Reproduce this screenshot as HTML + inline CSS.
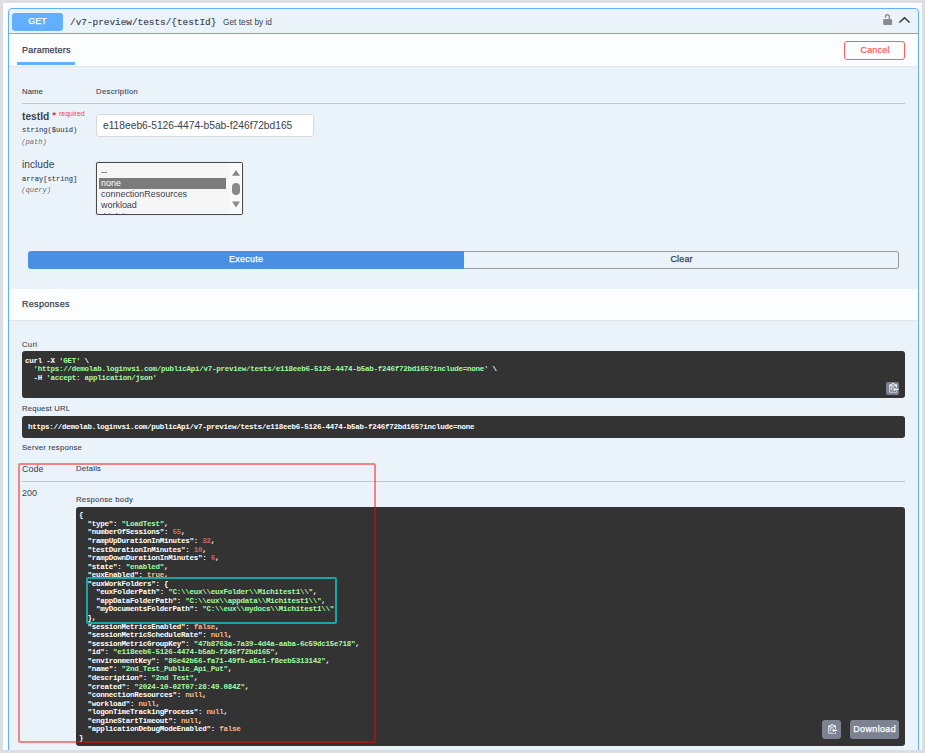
<!DOCTYPE html>
<html><head><meta charset="utf-8">
<style>
*{margin:0;padding:0;box-sizing:border-box}
html,body{width:925px;height:753px;overflow:hidden;background:#dddee1}
body{position:relative;font-family:"Liberation Sans",sans-serif;color:#3b4151}
.a{position:absolute}
.t{position:absolute;white-space:pre;line-height:1;font-family:"Liberation Sans",sans-serif}
.m{position:absolute;white-space:pre;line-height:1;font-family:"Liberation Mono",monospace}
#frame{position:absolute;left:3px;top:3px;width:919px;height:747px;background:#fff;overflow:hidden}
#op{position:absolute;left:5px;top:5px;width:911px;height:760px;border:1px solid #61affe;border-radius:4px;background:#ebf3fa}
.code{position:absolute;white-space:pre;font-family:"Liberation Mono",monospace;font-weight:bold;font-size:7.5px;letter-spacing:-0.25px;line-height:8.56px;color:#fff}
.code .s{color:#a2fca2}.code .n{color:#d36363}.code .l{color:#f8b986}
</style></head><body>
<div id="frame"><div style="position:absolute;left:4px;top:1px;right:0;bottom:0;background:#fafafa"></div><div id="op"></div></div>
<div class="a" style="left:9px;top:9px;width:909px;height:25px;border-bottom:1px solid #61affe"></div>
<div class="a" style="left:12px;top:12.5px;width:51px;height:18px;background:#61affe;border-radius:3px"></div>
<div class="t" style="left:12px;top:17.25px;font-size:8.96px;letter-spacing:0.000px;-webkit-text-stroke:0.25px #fff;text-indent:0.000px;color:#fff;width:51px;text-align:center">GET</div>
<div class="m" style="left:70px;top:17.65px;font-size:9.39px;color:#3b4151;-webkit-text-stroke:0.15px #3b4151">/v7-preview/tests/{testId}</div>
<div class="t" style="left:223px;top:17.5px;font-size:8.32px;color:#3b4151;">Get test by id</div>
<svg class="a" style="left:881px;top:12px" width="14" height="16" viewBox="0 0 14 16">
<path d="M4.5 5.8 V4.7 A1.9 1.9 0 0 1 8.3 4.7 V7.2" fill="none" stroke="#8b8b8b" stroke-width="1.4"/>
<rect x="2.2" y="7" width="8.9" height="6" rx="1.1" fill="#8b8b8b"/></svg>
<svg class="a" style="left:897px;top:13px" width="16" height="12" viewBox="0 0 16 12">
<path d="M2.4 9.5 L7.5 4.7 L12.6 9.5" fill="none" stroke="#303030" stroke-width="1.35"/></svg>
<div class="a" style="left:9px;top:34px;width:909px;height:32px;background:#fbfdff;box-shadow:0 1px 1px rgba(0,0,0,.05)"></div>
<div class="t" style="left:22px;top:46.3px;font-size:8.96px;letter-spacing:0.251px;-webkit-text-stroke:0.25px #3b4151;color:#3b4151;">Parameters</div>
<div class="a" style="left:17px;top:62px;width:58px;height:2.6px;background:#61affe"></div>
<div class="a" style="left:844px;top:41px;width:61px;height:18.6px;border:1.3px solid #ff6060;border-radius:3px"></div>
<div class="t" style="left:845px;top:46.1px;font-size:8.96px;letter-spacing:0.249px;-webkit-text-stroke:0.25px #ff6060;text-indent:0.249px;color:#ff6060;width:60px;text-align:center">Cancel</div>
<div class="t" style="left:22px;top:87.7px;font-size:7.68px;letter-spacing:0.108px;-webkit-text-stroke:0.1px #3b4151;color:#3b4151;">Name</div>
<div class="t" style="left:96px;top:87.7px;font-size:7.68px;letter-spacing:0.348px;-webkit-text-stroke:0.1px #3b4151;color:#3b4151;">Description</div>
<div class="a" style="left:22px;top:103px;width:883px;height:1px;background:rgba(59,65,81,.25)"></div>
<div class="t" style="left:22px;top:111.7px;font-size:10.24px;letter-spacing:0.378px;-webkit-text-stroke:0.25px #3b4151;color:#3b4151;font-weight:bold;letter-spacing:0;-webkit-text-stroke:0">testId</div>
<svg class="a" style="left:51.6px;top:112.4px" width="4.2" height="4.4" viewBox="0 0 4.2 4.4"><path d="M2.05 2.0 L2.05 0.45 M2.05 2.0 L3.52 1.52 M2.05 2.0 L0.58 1.52 M2.05 2.0 L2.96 3.25 M2.05 2.0 L1.14 3.25" stroke="#f00" stroke-width="0.75" stroke-linecap="round" fill="none"/></svg>
<div class="t" style="left:59px;top:110.3px;font-size:7px;color:#ff3b3b;">required</div>
<div class="m" style="left:22px;top:126.5px;font-size:7.08px;color:#3b4151;-webkit-text-stroke:0.1px #3b4151">string($uuid)</div>
<div class="m" style="left:21.3px;top:138.5px;font-size:7.08px;color:#6e6e6e;font-style:italic">(path)</div>
<div class="a" style="left:96px;top:114px;width:218px;height:23px;background:#fff;border:1px solid #d9d9d9;border-radius:3px"></div>
<div class="t" style="left:103px;top:120.95px;font-size:10.24px;color:#3b4151;">e118eeb6-5126-4474-b5ab-f246f72bd165</div>
<div class="t" style="left:22px;top:160px;font-size:10.24px;color:#3b4151;">include</div>
<div class="m" style="left:22px;top:175.5px;font-size:7.08px;color:#3b4151;-webkit-text-stroke:0.1px #3b4151">array[string]</div>
<div class="m" style="left:21.3px;top:186.5px;font-size:7.08px;color:#6e6e6e;font-style:italic">(query)</div>
<div class="a" style="left:96px;top:162px;width:147px;height:53px;background:#f6f6f6;border:1px solid #4a4a4a;border-radius:2px;box-shadow:0 0 1px rgba(0,0,0,.3)"></div>
<div class="a" style="left:99px;top:177.5px;width:127px;height:11px;background:#7b7b7b"></div>
<div class="t" style="left:101px;top:168px;font-size:8.96px;color:#3b4151;">--</div>
<div class="t" style="left:101px;top:178.5px;font-size:8.96px;color:#fff;">none</div>
<div class="t" style="left:101px;top:189.5px;font-size:8.96px;color:#3b4151;">connectionResources</div>
<div class="t" style="left:101px;top:200.5px;font-size:8.96px;color:#3b4151;">workload</div>
<div class="a" style="left:97px;top:163px;width:145px;height:51px;overflow:hidden"><div class="t" style="left:4px;top:49.5px;font-size:8.96px;color:#3b4151">thinktime</div></div>
<div class="a" style="left:229px;top:163px;width:13px;height:51px;background:#fafafa"></div>
<svg class="a" style="left:229px;top:163px" width="13" height="51" viewBox="0 0 13 51">
<path d="M3 12.7 L7 7 L11 12.7 Z" fill="#8a8a8a"/>
<rect x="3" y="20" width="8" height="12" rx="4" fill="#8a8a8a"/>
<path d="M3 38.5 L7 44.4 L11 38.5 Z" fill="#8a8a8a"/></svg>
<div class="a" style="left:28px;top:251px;width:436px;height:18px;background:#4990e2;border-radius:3px 0 0 3px"></div>
<div class="t" style="left:28px;top:255.1px;font-size:8.96px;letter-spacing:0.284px;-webkit-text-stroke:0.25px #fff;text-indent:0.284px;color:#fff;width:436px;text-align:center">Execute</div>
<div class="a" style="left:464px;top:251px;width:435px;height:17.8px;border:1.3px solid #9c9c9c;border-left:none;border-radius:0 3px 3px 0"></div>
<div class="t" style="left:464px;top:255.1px;font-size:8.96px;letter-spacing:0.200px;-webkit-text-stroke:0.25px #3b4151;text-indent:0.200px;color:#3b4151;width:435px;text-align:center">Clear</div>
<div class="a" style="left:9px;top:289px;width:909px;height:31px;background:#fbfdff;box-shadow:0 1px 1px rgba(0,0,0,.05)"></div>
<div class="t" style="left:22px;top:300.4px;font-size:8.96px;letter-spacing:0.331px;-webkit-text-stroke:0.25px #3b4151;color:#3b4151;">Responses</div>
<div class="t" style="left:22px;top:340.65px;font-size:7.68px;letter-spacing:0.320px;-webkit-text-stroke:0.1px #3b4151;color:#3b4151;">Curl</div>
<div class="a" style="left:22px;top:351px;width:883px;height:46.5px;background:#333;border-radius:3px"></div>
<div class="code" style="left:25px;top:356.5px">curl -X <span class="s">'GET'</span> \
  <span class="s">'https://demolab.loginvsi.com/publicApi/v7-preview/tests/e118eeb6-5126-4474-b5ab-f246f72bd165?include=none'</span> \
  -H <span class="s">'accept: application/json'</span></div>
<div class="a" style="left:886px;top:382px;width:13px;height:13px;background:#7d8293;border-radius:2px"></div>
<div class="t" style="left:22px;top:404.85px;font-size:7.68px;letter-spacing:0.192px;-webkit-text-stroke:0.1px #3b4151;color:#3b4151;">Request URL</div>
<div class="a" style="left:22px;top:416.3px;width:883px;height:21.4px;background:#333;border-radius:3px"></div>
<div class="code" style="left:28px;top:423px">https://demolab.loginvsi.com/publicApi/v7-preview/tests/e118eeb6-5126-4474-b5ab-f246f72bd165?include=none</div>
<div class="t" style="left:22px;top:444.3px;font-size:7.68px;letter-spacing:0.256px;-webkit-text-stroke:0.1px #3b4151;color:#3b4151;">Server response</div>
<div class="t" style="left:22px;top:464.55px;font-size:8.96px;color:#3b4151;">Code</div>
<div class="t" style="left:76px;top:464.6px;font-size:7.68px;letter-spacing:0.244px;-webkit-text-stroke:0.1px #3b4151;color:#3b4151;">Details</div>
<div class="a" style="left:22px;top:481px;width:883px;height:1px;background:rgba(59,65,81,.25)"></div>
<div class="t" style="left:22px;top:489.4px;font-size:8.96px;color:#3b4151;">200</div>
<div class="t" style="left:76px;top:495.9px;font-size:7.68px;letter-spacing:0.293px;-webkit-text-stroke:0.1px #3b4151;color:#3b4151;">Response body</div>
<div class="a" style="left:75.7px;top:507px;width:829.3px;height:238.5px;background:#333;border-radius:3px"></div>
<div class="code" style="left:79px;top:511.3px">{
  "type": <span class="s">"LoadTest"</span>,
  "numberOfSessions": <span class="n">55</span>,
  "rampUpDurationInMinutes": <span class="n">32</span>,
  "testDurationInMinutes": <span class="n">10</span>,
  "rampDownDurationInMinutes": <span class="n">6</span>,
  "state": <span class="s">"enabled"</span>,
  "euxEnabled": <span class="l">true</span>,
  "euxWorkFolders": {
    "euxFolderPath": <span class="s">"C:\\eux\\euxFolder\\Michitest1\\"</span>,
    "appDataFolderPath": <span class="s">"C:\\eux\\appdata\\Michitest1\\"</span>,
    "myDocumentsFolderPath": <span class="s">"C:\\eux\\mydocs\\Michitest1\\"</span>
  },
  "sessionMetricsEnabled": <span class="l">false</span>,
  "sessionMetricScheduleRate": <span class="l">null</span>,
  "sessionMetricGroupKey": <span class="s">"47b8763a-7a39-4d4a-aaba-6c59dc15e718"</span>,
  "id": <span class="s">"e118eeb6-5126-4474-b5ab-f246f72bd165"</span>,
  "environmentKey": <span class="s">"86e42b56-fa71-49fb-a5c1-f8eeb5313142"</span>,
  "name": <span class="s">"2nd_Test_Public_Api_Put"</span>,
  "description": <span class="s">"2nd Test"</span>,
  "created": <span class="s">"2024-10-02T07:28:49.084Z"</span>,
  "connectionResources": <span class="l">null</span>,
  "workload": <span class="l">null</span>,
  "logonTimeTrackingProcess": <span class="l">null</span>,
  "engineStartTimeout": <span class="l">null</span>,
  "applicationDebugModeEnabled": <span class="l">false</span>
}</div>
<div class="a" style="left:822px;top:720px;width:19px;height:19px;background:#7d8293;border-radius:3px"></div>
<div class="a" style="left:850px;top:720px;width:49px;height:19px;background:#7d8293;border-radius:3px"></div>
<div class="t" style="left:850px;top:725.4px;font-size:8.96px;letter-spacing:0.370px;-webkit-text-stroke:0.25px #fff;text-indent:0.370px;color:#fff;width:49px;text-align:center">Download</div>
<svg class="a" style="left:826.7px;top:724.4px;overflow:visible" width="9.6" height="10.24" viewBox="0 0 15 16"><g transform="translate(2,-1)"><path fill="#fff" fill-rule="evenodd" d="M2 13h4v1H2v-1zm5-6H2v1h5V7zm2 3V8l-3 3 3 3v-2h5v-2H9zM4.5 9H2v1h2.5V9zM2 12h2.5v-1H2v1zm9 1h1v2c-.02.28-.11.52-.3.7-.19.18-.42.28-.7.3H1c-.55 0-1-.45-1-1V4c0-.55.45-1 1-1h3c0-1.11.89-2 2-2 1.11 0 2 .89 2 2h3c.55 0 1 .45 1 1v5h-1V6H1v9h10v-2zM2 5h8c0-.55-.45-1-1-1H8c-.55 0-1-.45-1-1s-.45-1-1-1-1 .45-1 1-.45 1-1 1H3c-.55 0-1 .45-1 1z"/></g></svg>
<svg class="a" style="left:887.7px;top:383.4px;overflow:visible" width="9.6" height="10.24" viewBox="0 0 15 16"><g transform="translate(2,-1)"><path fill="#fff" fill-rule="evenodd" d="M2 13h4v1H2v-1zm5-6H2v1h5V7zm2 3V8l-3 3 3 3v-2h5v-2H9zM4.5 9H2v1h2.5V9zM2 12h2.5v-1H2v1zm9 1h1v2c-.02.28-.11.52-.3.7-.19.18-.42.28-.7.3H1c-.55 0-1-.45-1-1V4c0-.55.45-1 1-1h3c0-1.11.89-2 2-2 1.11 0 2 .89 2 2h3c.55 0 1 .45 1 1v5h-1V6H1v9h10v-2zM2 5h8c0-.55-.45-1-1-1H8c-.55 0-1-.45-1-1s-.45-1-1-1-1 .45-1 1-.45 1-1 1H3c-.55 0-1 .45-1 1z"/></g></svg>
<div class="a" style="left:17.8px;top:462.7px;width:358.2px;height:280.3px;border:2px solid rgba(255,0,0,.47);border-radius:2px"></div>
<div class="a" style="left:86px;top:577px;width:251px;height:46.8px;border:2px solid #1aa6a8;border-radius:2px"></div>
</body></html>
